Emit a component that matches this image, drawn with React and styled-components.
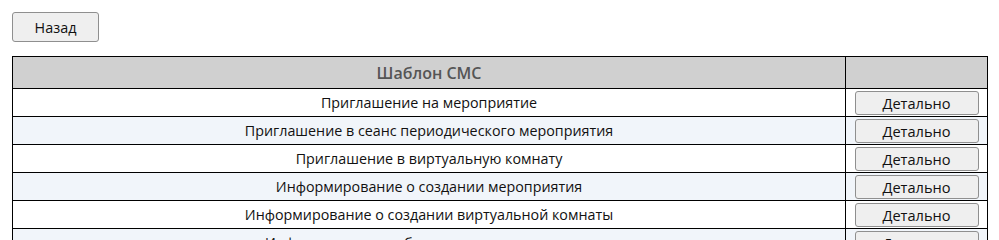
import styled, { createGlobalStyle } from 'styled-components'

const GlobalStyle = createGlobalStyle`
  body {
    margin: 0;
    background: #ffffff;
    font-family: 'Open Sans', 'Noto Sans', sans-serif;
  }
`

const Page = styled.div`
  padding: 12px 11px 0 12px;
`

const BackButton = styled.button`
  width: 87px;
  height: 30px;
  padding: 0;
  font-family: inherit;
  font-size: 14.4px;
  color: #111;
  background: #efefef;
  border: 1px solid #8f8f8f;
  border-radius: 3px;
  cursor: pointer;
  margin-bottom: 14px;
`

const Table = styled.table`
  width: 976px;
  border-collapse: collapse;
  border: 1px solid #000;
`

const HeadCell = styled.th`
  height: 31px;
  padding: 0;
  background: #d0d0d0;
  color: #555;
  font-size: 16px;
  font-weight: 600;
  border: 1px solid #000;
  width: ${({ $narrow }) => ($narrow ? '141px' : 'auto')};
`

const Row = styled.tr`
  background: ${({ $alt }) => ($alt ? '#f1f5fa' : '#ffffff')};
`

const Cell = styled.td`
  height: 27px;
  padding: 0;
  text-align: center;
  font-size: 14.3px;
  color: #111;
  border: 1px solid #000;
`

const DetailButton = styled.button`
  width: 124px;
  height: 24px;
  padding: 0;
  font-family: inherit;
  font-size: 14.6px;
  line-height: 22px;
  color: #111;
  background: #efefef;
  border: 1px solid #8f8f8f;
  border-radius: 3px;
  cursor: pointer;
  vertical-align: middle;
`

const templates = [
  'Приглашение на мероприятие',
  'Приглашение в сеанс периодического мероприятия',
  'Приглашение в виртуальную комнату',
  'Информирование о создании мероприятия',
  'Информирование о создании виртуальной комнаты',
  'Информирование об изменении мероприятия',
]

const App = () => (
  <Page>
    <GlobalStyle />
    <BackButton>Назад</BackButton>
    <Table>
      <thead>
        <tr>
          <HeadCell>Шаблон СМС</HeadCell>
          <HeadCell $narrow />
        </tr>
      </thead>
      <tbody>
        {templates.map((name, i) => (
          <Row key={name} $alt={i % 2 === 1}>
            <Cell>{name}</Cell>
            <Cell>
              <DetailButton>Детально</DetailButton>
            </Cell>
          </Row>
        ))}
      </tbody>
    </Table>
  </Page>
)

export default App
